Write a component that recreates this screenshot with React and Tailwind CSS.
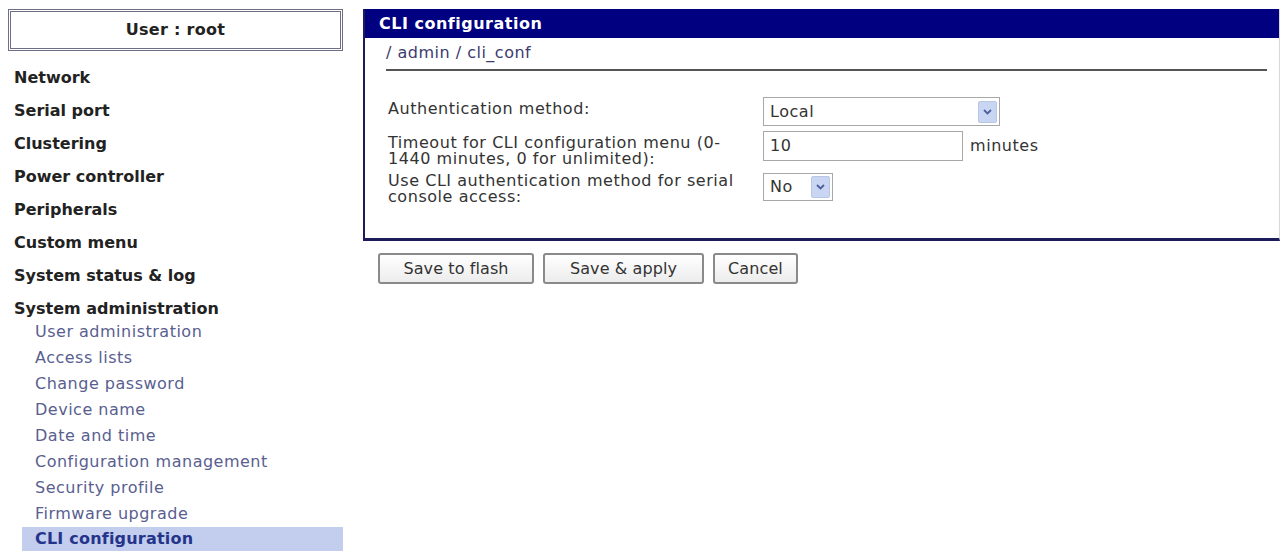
import React from "react";

const mainMenu = [
  "Network",
  "Serial port",
  "Clustering",
  "Power controller",
  "Peripherals",
  "Custom menu",
  "System status & log",
];

const adminMenu = [
  "User administration",
  "Access lists",
  "Change password",
  "Device name",
  "Date and time",
  "Configuration management",
  "Security profile",
  "Firmware upgrade",
];

function SelectArrow() {
  return (
    <span className="flex h-[22px] w-[19px] items-center justify-center rounded-[2px] border border-[#b9c6e6] bg-[#c9d6f3]">
      <svg width="9" height="6" viewBox="0 0 9 6">
        <path d="M1 1 L4.5 4.5 L8 1" fill="none" stroke="#4d5f9e" strokeWidth="1.8" />
      </svg>
    </span>
  );
}

function FakeSelect({ value, className }) {
  return (
    <div
      className={`flex items-center justify-between border border-[#a8a8a8] bg-white pl-[6px] pr-[2px] text-[#333] ${className}`}
    >
      <span>{value}</span>
      <SelectArrow />
    </div>
  );
}

function Button({ children, className }) {
  return (
    <button
      className={`h-[31px] rounded-[3px] border-2 border-[#8a8a8a] bg-gradient-to-b from-white to-[#ececec] text-[16px] tracking-[0.1px] text-[#333] ${className}`}
    >
      {children}
    </button>
  );
}

export default function App() {
  return (
    <div
      className="flex min-h-[557px] w-[1282px] bg-white text-[#222]"
      style={{ fontFamily: '"DejaVu Sans", Verdana, sans-serif' }}
    >
      <aside className="w-[363px] shrink-0 pt-[9px]">
        <div className="ml-[8px] flex h-[42px] w-[335px] items-center justify-center border-[3px] border-double border-[#6f6f84] text-[16px] font-bold tracking-[0.3px]">
          User : root
        </div>
        <nav className="mt-[10px]">
          {mainMenu.map((m) => (
            <div key={m} className="flex h-[33px] items-center pl-[14px] text-[16px] font-bold text-[#222]">
              {m}
            </div>
          ))}
          <div className="h-[27px] pl-[14px] pt-[7px] text-[16px] font-bold leading-[19px] text-[#222]">
            System administration
          </div>
          {adminMenu.map((m) => (
            <div key={m} className="flex h-[26px] items-center pl-[35px] text-[16px] tracking-[0.5px] text-[#59608f]">
              {m}
            </div>
          ))}
          <div className="ml-[22px] flex h-[24px] w-[321px] items-center bg-[#c3cdee] pl-[13px] text-[16px] font-bold tracking-[0.2px] text-[#24348a]">
            CLI configuration
          </div>
        </nav>
      </aside>

      <main className="flex-1 pt-[9px]">
        <section className="mr-[2px] border-b-[3px] border-l-2 border-r border-b-[#1c1c5a] border-l-[#1c1c5a] border-r-[#d8d8d8]">
          <div className="flex h-[29px] items-center bg-[#000080] pl-[14px] text-[16px] font-bold tracking-[0.5px] text-white">
            CLI configuration
          </div>
          <div className="pl-[21px] pr-[12px] pt-[5px]">
            <div className="border-b-2 border-[#555] pb-[7px] text-[16px] leading-[19px] tracking-[0.5px] text-[#3b3b6e]">
              / admin / cli_conf
            </div>
          </div>
          <div className="flex flex-col pb-[33px] pl-[23px] pt-[26px] text-[16px] leading-[16px] tracking-[0.55px] text-[#333]">
            <div className="flex">
              <div className="w-[375px] pt-[4px]">Authentication method:</div>
              <FakeSelect value="Local" className="h-[29px] w-[237px]" />
            </div>
            <div className="mt-[5px] flex">
              <div className="w-[375px] pt-[4px]">
                Timeout for CLI configuration menu (0-
                <br />
                1440 minutes, 0 for unlimited):
              </div>
              <div className="flex h-[30px] items-center">
                <div className="flex h-[30px] w-[200px] items-center border border-[#a8a8a8] bg-white pl-[6px]">10</div>
                <span className="ml-[7px]">minutes</span>
              </div>
            </div>
            <div className="mt-[6px] flex">
              <div className="w-[375px]">
                Use CLI authentication method for serial
                <br />
                console access:
              </div>
              <FakeSelect value="No" className="h-[28px] w-[70px]" />
            </div>
          </div>
        </section>
        <div className="mt-[12px] flex gap-[9px] pl-[15px]">
          <Button className="w-[156px]">Save to flash</Button>
          <Button className="w-[161px]">Save &amp; apply</Button>
          <Button className="w-[85px]">Cancel</Button>
        </div>
      </main>
    </div>
  );
}
